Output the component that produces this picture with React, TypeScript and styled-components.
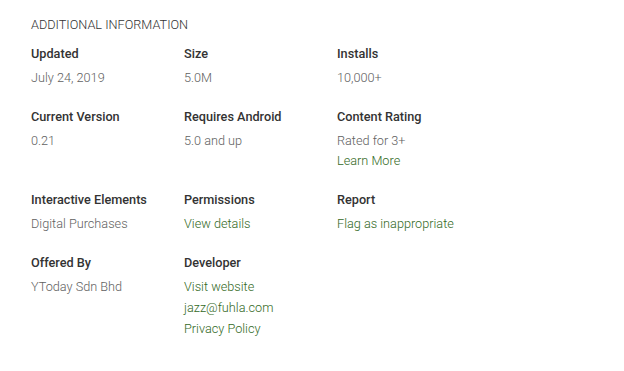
import styled, { createGlobalStyle } from 'styled-components'

const GlobalStyle = createGlobalStyle`
    body {
        margin: 0;
        background: #fff;
        font-family: Roboto, 'Liberation Sans', sans-serif;
    }
`

const Wrapper = styled.div`
    padding: 15px 31px 0 31px;
`

const Title = styled.h2`
    margin: 0 0 9px 0;
    font-size: 12.7px;
    font-weight: 300;
    line-height: 20px;
    color: #333;
    text-transform: uppercase;
`

const Grid = styled.div`
    display: grid;
    grid-template-columns: repeat(3, 153px);
`

const Item = styled.div`
    display: flex;
    flex-direction: column;
    margin-bottom: 19px;
`

const Label = styled.div`
    font-size: 12.7px;
    font-weight: 500;
    line-height: 20px;
    color: #333;
    margin-bottom: 3px;
`

const Value = styled.span<{ $link?: boolean; $afterLink?: boolean }>`
    font-size: 12.7px;
    font-weight: 300;
    line-height: 20px;
    margin-top: ${p => (p.$afterLink ? '1px' : '0')};
    color: ${p => (p.$link ? '#33691e' : '#616161')};
    cursor: ${p => (p.$link ? 'pointer' : 'default')};

    &:first-of-type {
        margin-top: 1px;
    }
`

type Info = { label: string; values: { text: string; link?: boolean }[] }

const items: Info[] = [
    { label: 'Updated', values: [{ text: 'July 24, 2019' }] },
    { label: 'Size', values: [{ text: '5.0M' }] },
    { label: 'Installs', values: [{ text: '10,000+' }] },
    { label: 'Current Version', values: [{ text: '0.21' }] },
    { label: 'Requires Android', values: [{ text: '5.0 and up' }] },
    { label: 'Content Rating', values: [{ text: 'Rated for 3+' }, { text: 'Learn More', link: true }] },
    { label: 'Interactive Elements', values: [{ text: 'Digital Purchases' }] },
    { label: 'Permissions', values: [{ text: 'View details', link: true }] },
    { label: 'Report', values: [{ text: 'Flag as inappropriate', link: true }] },
    { label: 'Offered By', values: [{ text: 'YToday Sdn Bhd' }] },
    {
        label: 'Developer',
        values: [
            { text: 'Visit website', link: true },
            { text: 'jazz@fuhla.com', link: true },
            { text: 'Privacy Policy', link: true },
        ],
    },
]

export default function App() {
    return (
        <Wrapper>
            <GlobalStyle />
            <Title>Additional Information</Title>
            <Grid>
                {items.map(item => (
                    <Item key={item.label}>
                        <Label>{item.label}</Label>
                        {item.values.map((v, i) => (
                            <Value
                                key={v.text}
                                $link={v.link}
                                $afterLink={i > 0 && v.link && item.values[i - 1].link}
                            >
                                {v.text}
                            </Value>
                        ))}
                    </Item>
                ))}
            </Grid>
        </Wrapper>
    )
}
